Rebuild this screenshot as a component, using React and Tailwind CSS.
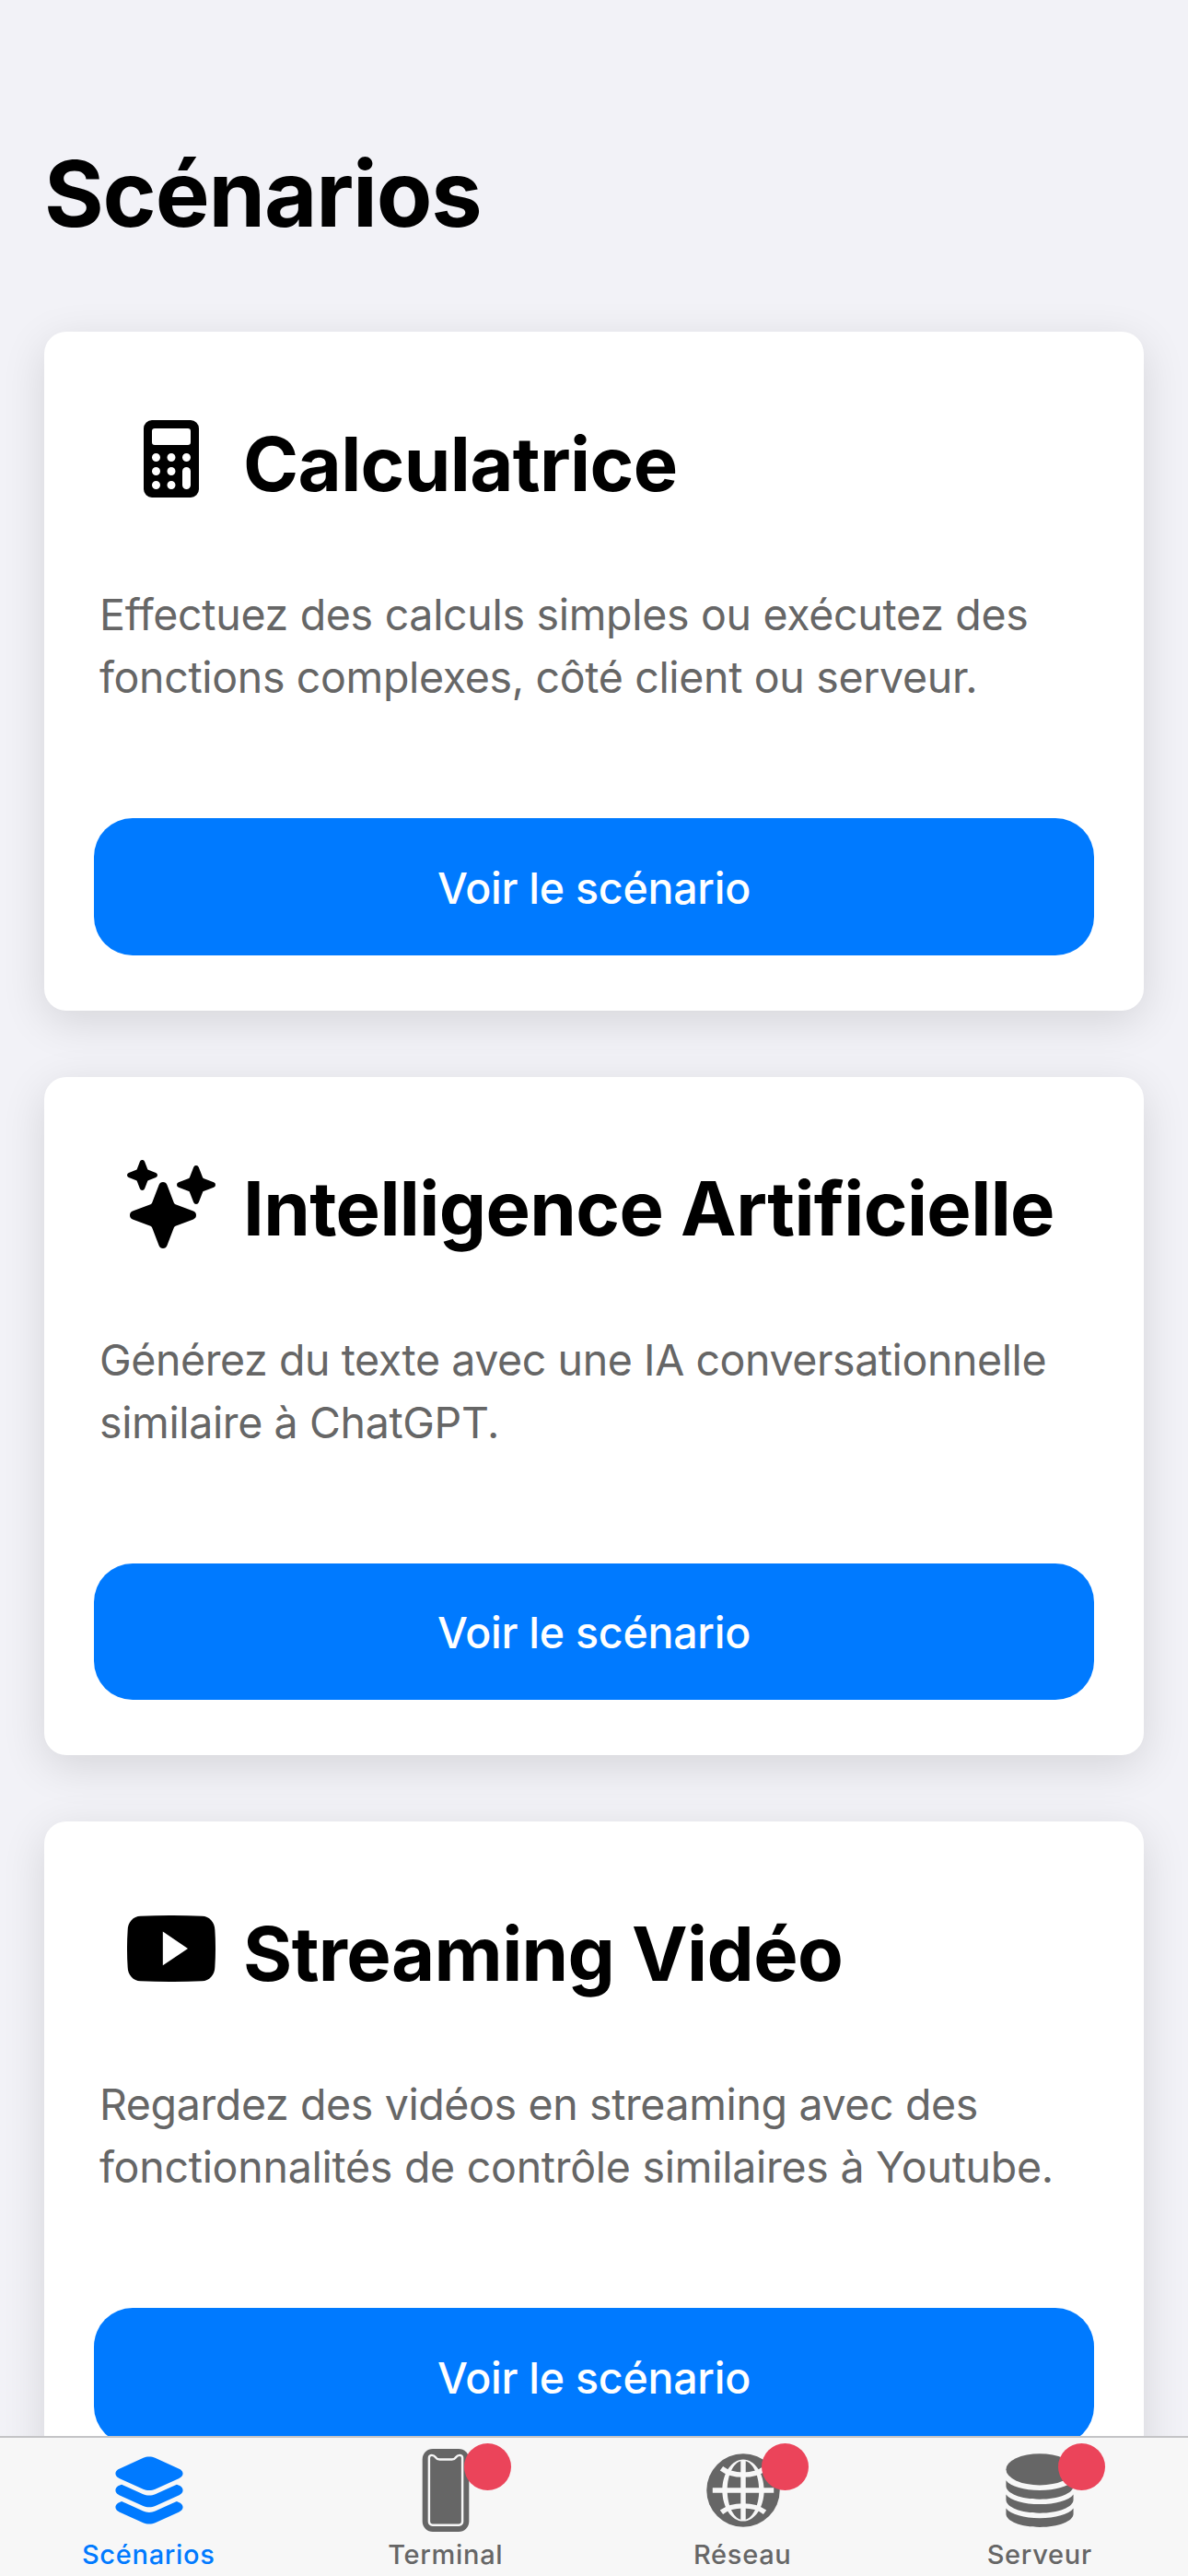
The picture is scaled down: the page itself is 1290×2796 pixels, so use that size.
import React from "react";

const CARDS = [
  {
    icon: "calculator",
    title: "Calculatrice",
    lines: [
      { text: "Effectuez des calculs simples ou exécutez des", tracking: "tracking-[-0.31px]" },
      { text: "fonctions complexes, côté client ou serveur.", tracking: "tracking-[-0.34px]" },
    ],
  },
  {
    icon: "sparkles",
    title: "Intelligence Artificielle",
    lines: [
      { text: "Générez du texte avec une IA conversationnelle", tracking: "tracking-[-0.42px]" },
      { text: "similaire à ChatGPT.", tracking: "tracking-[-0.38px]" },
    ],
  },
  {
    icon: "youtube",
    title: "Streaming Vidéo",
    lines: [
      { text: "Regardez des vidéos en streaming avec des", tracking: "tracking-[-0.38px]" },
      { text: "fonctionnalités de contrôle similaires à Youtube.", tracking: "tracking-[-0.27px]" },
    ],
  },
];

function CardIcon({ name }) {
  return (
    <svg viewBox="0 0 512 512" className="h-[96px] w-[96px] shrink-0" fill="currentColor">
      {name === "calculator" && (
        <path
          fillRule="evenodd"
          d="M144 32h224a48 48 0 0 1 48 48v352a48 48 0 0 1-48 48H144a48 48 0 0 1-48-48V80a48 48 0 0 1 48-48zM160 80a16 16 0 0 0-16 16v64a16 16 0 0 0 16 16h192a16 16 0 0 0 16-16V96a16 16 0 0 0-16-16zM168 224a24 24 0 1 0 0 48a24 24 0 1 0 0-48zM256 224a24 24 0 1 0 0 48a24 24 0 1 0 0-48zM344 224a24 24 0 1 0 0 48a24 24 0 1 0 0-48zM168 304a24 24 0 1 0 0 48a24 24 0 1 0 0-48zM256 304a24 24 0 1 0 0 48a24 24 0 1 0 0-48zM168 384a24 24 0 1 0 0 48a24 24 0 1 0 0-48zM256 384a24 24 0 1 0 0 48a24 24 0 1 0 0-48zM344 304a24 24 0 0 0-24 24v80a24 24 0 0 0 48 0v-80a24 24 0 0 0-24-24z"
        />
      )}
      {name === "sparkles" && (
        <path d="M208 512a24.84 24.84 0 0 1-23.34-16l-39.84-103.6a16.06 16.06 0 0 0-9.19-9.19L32 343.34a25 25 0 0 1 0-46.68l103.6-39.84a16.06 16.06 0 0 0 9.19-9.19L184.66 144a25 25 0 0 1 46.68 0l39.84 103.6a16.06 16.06 0 0 0 9.19 9.19l103 39.63a25.49 25.49 0 0 1 16.63 24.1a24.82 24.82 0 0 1-16 22.82l-103.6 39.84a16.06 16.06 0 0 0-9.19 9.19L231.34 496A24.84 24.84 0 0 1 208 512zm66.85-254.84zM88 176a14.67 14.67 0 0 1-13.69-9.4l-16.86-43.84a7.28 7.28 0 0 0-4.21-4.21L9.4 101.69a14.67 14.67 0 0 1 0-27.38l43.84-16.86a7.31 7.31 0 0 0 4.21-4.21L74.16 9.79A15 15 0 0 1 86.23.11a14.67 14.67 0 0 1 15.46 9.29l16.86 43.84a7.31 7.31 0 0 0 4.21 4.21l43.84 16.86a14.67 14.67 0 0 1 0 27.38l-43.84 16.86a7.28 7.28 0 0 0-4.21 4.21l-16.86 43.84A14.67 14.67 0 0 1 88 176zM400 256a16 16 0 0 1-14.93-10.26l-22.84-59.37a8 8 0 0 0-4.6-4.6l-59.37-22.84a16 16 0 0 1 0-29.86l59.37-22.84a8 8 0 0 0 4.6-4.6l22.67-58.95a16.45 16.45 0 0 1 13.17-10.57a16 16 0 0 1 16.86 10.15l22.84 59.37a8 8 0 0 0 4.6 4.6l59.37 22.84a16 16 0 0 1 0 29.86l-59.37 22.84a8 8 0 0 0-4.6 4.6l-22.84 59.37A16 16 0 0 1 400 256z" />
      )}
      {name === "youtube" && (
        <path d="M508.64 148.79c0-45-33.1-81.2-74-81.2C379.24 65 322.74 64 265 64h-18c-57.6 0-114.2 1-169.6 3.6C36.6 67.6 3.5 104 3.5 149C1 184.59-.06 220.19 0 255.79q-.15 53.4 3.4 106.9c0 45 33.1 81.5 73.9 81.5c58.2 2.7 117.9 3.9 178.6 3.8q91.2.3 178.6-3.8c40.9 0 74-36.5 74-81.5c2.4-35.7 3.5-71.3 3.4-107q.34-53.4-3.26-106.9zM207 353.89v-196.5l145 98.2z" />
      )}
    </svg>
  );
}

const DISK = "M48 195c28 38 112 61 208 61s180-23 208-61v34c0 46-93 82-208 82S48 275 48 229z";

function TabIcon({ name }) {
  return (
    <svg viewBox="0 0 512 512" className="h-[90px] w-[90px]" fill="currentColor">
      {name === "layers" && (
        <>
          <path d="M256 256c-13.47 0-26.94-2.39-37.44-7.17l-148-67.49C63.79 178.26 48 169.25 48 152.24s15.79-26 22.58-29.12l149.28-68.07c20.57-9.4 51.61-9.4 72.19 0l149.37 68.07c6.79 3.09 22.58 12.1 22.58 29.12s-15.79 26-22.58 29.11l-148 67.48C282.94 253.61 269.47 256 256 256z" />
          <path d="M441.36 226.81L426.27 220l-38.77 17.74l-94 43c-10.5 4.8-24 7.19-37.44 7.19s-26.93-2.39-37.42-7.19l-94.07-43L85.79 220l-15.22 6.84C63.79 229.93 48 239 48 256s15.79 26.08 22.56 29.17l148 67.63C229 357.6 242.49 360 256 360s26.94-2.4 37.44-7.19l147.87-67.61c6.81-3.09 22.69-12.11 22.69-29.2s-15.77-26.07-22.64-29.19z" />
          <path d="M441.36 330.8l-15.09-6.8l-38.77 17.73l-94 42.95c-10.5 4.78-24 7.18-37.44 7.18s-26.93-2.39-37.42-7.18l-94.07-43L85.79 324l-15.22 6.84C63.79 333.93 48 343 48 360s15.79 26.07 22.56 29.15l148 67.59C229 461.52 242.54 464 256 464s26.88-2.48 37.38-7.27l147.92-67.57c6.82-3.08 22.7-12.1 22.7-29.16s-15.77-26.07-22.64-29.2z" />
        </>
      )}
      {name === "phone" && (
        <>
          <rect x="112" y="0" width="288" height="512" rx="64" />
          <path
            fill="none"
            className="stroke-[#f7f7f7]"
            strokeWidth="14"
            strokeLinejoin="round"
            d="M170 39a17 17 0 0 0-17 17v394a21 21 0 0 0 21 21h164a21 21 0 0 0 21-21V56a17 17 0 0 0-17-17c-12 0-18 6-24 14c-6 9-14 13-24 13h-76c-10 0-18-4-24-13c-6-8-12-14-24-14z"
          />
        </>
      )}
      {name === "globe" && (
        <>
          <circle cx="256" cy="256" r="226" />
          <path
            fillRule="evenodd"
            className="fill-[#f7f7f7]"
            d="M256 65c71 0 129 86 129 191s-58 191-129 191s-129-86-129-191s58-191 129-191zM256 73c-54 0-98 82-98 183s44 183 98 183s98-82 98-183s-44-183-98-183z"
          />
          <g fill="none" className="stroke-[#f7f7f7]" strokeWidth="31">
            <path d="M256 68v376M67 256h378" />
            <path d="M122 121c34 26 82 39 134 39s100-13 134-39M122 391c34-26 82-39 134-39s100 13 134 39" />
          </g>
        </>
      )}
      {name === "database" && (
        <>
          <ellipse cx="256" cy="127" rx="208" ry="97" />
          <path d={DISK} />
          <path d={DISK} transform="translate(0,86)" />
          <path d={DISK} transform="translate(0,172)" />
        </>
      )}
    </svg>
  );
}

function Card({ icon, title, lines }) {
  return (
    <article className="h-[736.5px] shrink-0 rounded-[24px] bg-white shadow-[0_12px_48px_rgba(0,0,0,0.12)]">
      <div className="flex h-[195px] items-start pt-[90px] pl-[90px] text-black">
        <CardIcon name={icon} />
        <h2 className="pt-[2.5px] pl-[30px] text-[81.3px] leading-[102px] font-bold tracking-[-0.6px] whitespace-nowrap">
          {title}
        </h2>
      </div>
      <p className="mt-[78px] pl-[60px] text-[46.5px] leading-[68px] whitespace-nowrap text-[#666666]">
        <span className={lines[0].tracking}>{lines[0].text}</span>
        <br />
        <span className={lines[1].tracking}>{lines[1].text}</span>
      </p>
      <button className="mx-[54px] mt-[119px] flex h-[148.5px] w-[1086px] items-center justify-center rounded-[42px] bg-[#007aff] pt-[5px] text-[46.5px] font-medium tracking-[-0.25px] text-white">
        Voir le scénario
      </button>
    </article>
  );
}

function Tab({ icon, label, active, badge }) {
  return (
    <div className={active ? "flex flex-1 flex-col items-center text-[#007aff]" : "flex flex-1 flex-col items-center text-[#666666]"}>
      <div className="relative mt-[12px] ml-[1px] h-[90px] w-[90px]">
        <TabIcon name={icon} />
        {badge && <span className="absolute top-[-6px] left-[64.75px] size-[51px] rounded-full bg-[#eb445a]" />}
      </div>
      <span className="mt-[7px] text-[29px] leading-[36px] font-medium tracking-[0.7px]">{label}</span>
    </div>
  );
}

export default function App() {
  return (
    <div className="flex h-[2796px] w-[1290px] flex-col overflow-hidden bg-[#f2f2f7] font-['Inter',sans-serif]">
      <header className="h-[360px] shrink-0 pt-[150px] pl-[48px]">
        <h1 className="text-[99px] leading-[120px] font-bold tracking-[-1.2px] text-black">Scénarios</h1>
      </header>
      <main className="flex min-h-0 flex-1 flex-col gap-[72px] px-[48px]">
        {CARDS.map((c) => (
          <Card key={c.title} {...c} />
        ))}
      </main>
      <nav className="relative flex h-[152px] shrink-0 border-t-[2px] border-[#c4c4c6] bg-[#f7f7f7]">
        <Tab icon="layers" label="Scénarios" active />
        <Tab icon="phone" label="Terminal" badge />
        <Tab icon="globe" label="Réseau" badge />
        <Tab icon="database" label="Serveur" badge />
      </nav>
    </div>
  );
}
